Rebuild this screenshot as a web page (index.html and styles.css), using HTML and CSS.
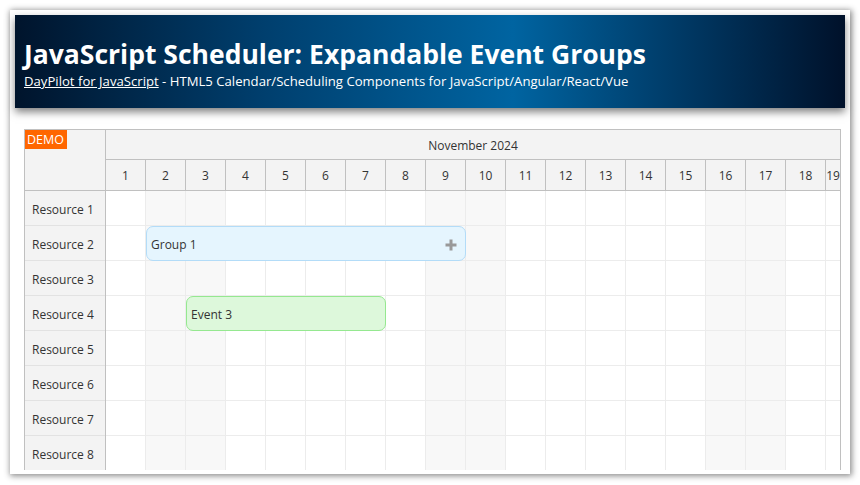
FILE: index.html
```html
<!DOCTYPE html>
<html>
<head>
<meta charset="utf-8">
<link rel="stylesheet" href="styles.css">
</head>
<body>
<div class="window">
  <div class="header">
    <h1 class="title">JavaScript Scheduler: Expandable Event Groups</h1>
    <div class="subtitle"><a href="#">DayPilot for JavaScript</a> - HTML5 Calendar/Scheduling Components for JavaScript/Angular/React/Vue</div>
  </div>
  <div class="main">
    <div class="scheduler">
      <div class="rowheaders">
        <div class="corner"><span class="demo">DEMO</span></div>
        <div class="rh">Resource 1</div>
        <div class="rh">Resource 2</div>
        <div class="rh">Resource 3</div>
        <div class="rh">Resource 4</div>
        <div class="rh">Resource 5</div>
        <div class="rh">Resource 6</div>
        <div class="rh">Resource 7</div>
        <div class="rh">Resource 8</div>
      </div>
      <div class="timeline">
        <div class="month">November 2024</div>
        <div class="days">
          <div class="day">1</div><div class="day">2</div><div class="day">3</div><div class="day">4</div><div class="day">5</div><div class="day">6</div><div class="day">7</div><div class="day">8</div><div class="day">9</div><div class="day">10</div><div class="day">11</div><div class="day">12</div><div class="day">13</div><div class="day">14</div><div class="day">15</div><div class="day">16</div><div class="day">17</div><div class="day">18</div><div class="day last">19</div>
        </div>
        <div class="grid" id="grid"></div>
      </div>
    </div>
  </div>
</div>
<script src="app.js"></script>
</body>
</html>
```
FILE: app.js
```js
(function () {
  var grid = document.getElementById('grid');
  var weekend = { 2: 1, 3: 1, 9: 1, 10: 1, 16: 1, 17: 1 };
  for (var r = 1; r <= 8; r++) {
    var row = document.createElement('div');
    row.className = 'row';
    for (var d = 1; d <= 19; d++) {
      var c = document.createElement('div');
      c.className = 'cell' + (weekend[d] ? ' off' : '');
      row.appendChild(c);
    }
    if (r === 2) {
      var g = document.createElement('div');
      g.className = 'event group';
      g.style.left = '40px';
      g.style.width = '320px';
      g.innerHTML = '<span>Group 1</span><svg class="plus" width="12" height="12" viewBox="0 0 12 12"><path d="M6 0.5V11.5M0.5 6H11.5" stroke="#999" stroke-width="3"/></svg>';
      row.appendChild(g);
    }
    if (r === 4) {
      var e = document.createElement('div');
      e.className = 'event green';
      e.style.left = '80px';
      e.style.width = '200px';
      e.innerHTML = '<span>Event 3</span>';
      row.appendChild(e);
    }
    grid.appendChild(row);
  }
})();
```
FILE: styles.css
```css
html, body {
  margin: 0;
  padding: 0;
  background: #ffffff;
}
body {
  font-family: "Open Sans", "Noto Sans", sans-serif;
  color: #333;
}
.window {
  margin: 10px;
  width: 840px;
  height: 464px;
  box-sizing: border-box;
  padding: 5px 5px 4px 5px;
  background: #fff;
  box-shadow: 1px 1px 6px 1px rgba(0, 0, 0, 0.45);
  display: flex;
  flex-direction: column;
}
.header {
  height: 93px;
  flex: none;
  box-sizing: border-box;
  padding: 22px 9px 0 9px;
  background: linear-gradient(90deg, #00142c 0%, #003f6e 30%, #0064a1 60%, #003a66 80%, #00112a 100%);
  box-shadow: 0 4px 8px rgba(0, 0, 0, 0.5);
  color: #fff;
  position: relative;
  z-index: 1;
}
.title {
  margin: 0;
  font-size: 26.5px;
  line-height: 34px;
  font-weight: 700;
}
.subtitle {
  font-size: 13.15px;
  line-height: 18px;
  margin-top: 1px;
}
.subtitle a {
  color: #fff;
}
.main {
  flex: 1;
  overflow: hidden;
  padding: 21px 4px 0 9px;
}
.scheduler {
  display: flex;
  border: 1px solid #c0c0c0;
  border-bottom: none;
  width: 817px;
  box-sizing: border-box;
  font-size: 12px;
  height: 400px;
}
.rowheaders {
  width: 81px;
  flex: none;
  background: #f3f3f3;
  border-right: 1px solid #c0c0c0;
  box-sizing: border-box;
}
.corner {
  height: 61px;
  border-bottom: 1px solid #c0c0c0;
  box-sizing: border-box;
}
.demo {
  display: inline-block;
  background: #ff6600;
  color: #fff;
  font-size: 12.5px;
  line-height: 19px;
  padding: 0 3px 0 2px;
}
.rh {
  height: 35px;
  box-sizing: border-box;
  border-bottom: 1px solid #e2e2e2;
  padding-left: 7px;
  padding-top: 2px;
  display: flex;
  align-items: center;
}
.timeline {
  flex: 1;
  overflow: hidden;
  min-width: 0;
}
.month {
  height: 30px;
  box-sizing: border-box;
  border-bottom: 1px solid #c0c0c0;
  background: #f3f3f3;
  padding-top: 2px;
  display: flex;
  align-items: center;
  justify-content: center;
}
.days {
  display: flex;
  height: 31px;
  box-sizing: border-box;
  border-bottom: 1px solid #c0c0c0;
  background: #f3f3f3;
}
.day {
  flex: none;
  width: 40px;
  box-sizing: border-box;
  border-right: 1px solid #c0c0c0;
  display: flex;
  align-items: center;
  justify-content: center;
}
.day.last {
  width: 14px;
  border-right: none;
}
.row {
  display: flex;
  height: 35px;
  position: relative;
}
.cell {
  flex: none;
  width: 40px;
  box-sizing: border-box;
  border-right: 1px solid #ececec;
  border-bottom: 1px solid #ececec;
  background: #fff;
}
.cell.off {
  background: #f8f8f8;
}
.event {
  position: absolute;
  top: 0;
  height: 35px;
  box-sizing: border-box;
  border-radius: 7px;
  display: flex;
  align-items: center;
  padding-left: 4px;
  padding-top: 2px;
}
.group {
  background: #e5f5fe;
  border: 1px solid #b3dcf8;
}
.green {
  background: #ddf8db;
  border: 1px solid #95e890;
}
.plus {
  position: absolute;
  right: 8px;
  top: 12px;
}
```
